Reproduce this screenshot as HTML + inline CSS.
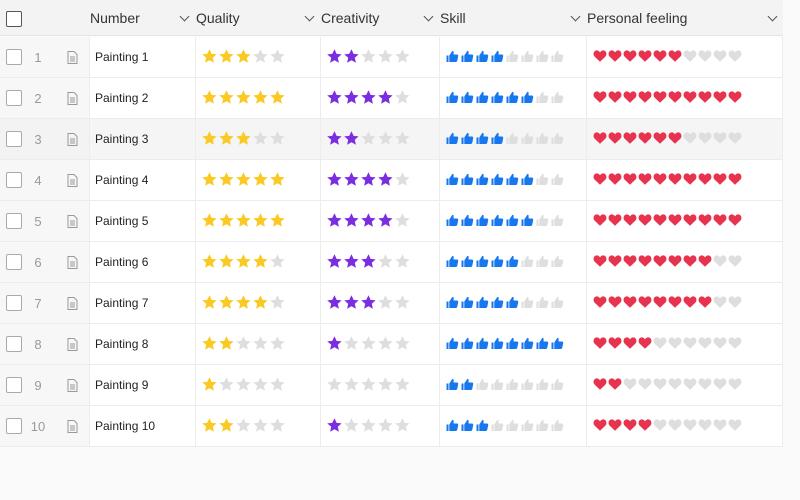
<!DOCTYPE html>
<html><head><meta charset="utf-8"><style>
body{margin:0;width:800px;height:500px;background:#fafafa;font-family:"Liberation Sans",sans-serif;position:relative;overflow:hidden}
.hdr{position:absolute;left:0;top:0;width:783px;height:36px;background:#f3f3f3;border-bottom:1px solid #e6e6e6;box-sizing:border-box}
.h{position:absolute;top:10px;font-size:14px;color:#333}
.chev{position:absolute;top:13px;width:6px;height:6px;border-right:1.3px solid #555;border-bottom:1.3px solid #555;transform:rotate(45deg)}
.row{position:absolute;left:0;width:783px;height:41px;box-sizing:border-box;border-bottom:1px solid #ececec}
.g{position:absolute;left:0;top:0;width:89px;height:40px;background:#f7f7f7}
.row.sel .g{background:#f3f3f3}
.c{position:absolute;top:0;height:40px;background:#fff;border-left:1px solid #ececec;box-sizing:border-box}
.row.sel .c{background:#f5f5f5}
.cb{position:absolute;left:6px;width:14px;height:14px;border:1.5px solid #aaa;border-radius:2px;background:#fff}
.num{position:absolute;top:13px;left:28px;width:20px;text-align:center;font-size:13px;color:#999}
.doc{position:absolute;left:67px;top:14px}
.nm{position:absolute;left:5px;top:13px;font-size:12px;color:#222}
.ic{position:absolute;top:12px;display:flex}
</style></head><body>
<svg width="0" height="0" style="position:absolute">
<defs>
<path id="st" d="M7.5 0.3l2.1 4.6 5 .5-3.8 3.4 1.1 4.9-4.4-2.5-4.4 2.5 1.1-4.9L0.2 5.4l5-.5z"/>
<path id="th" d="M0.5 6.5h2v6.5h-2zM3.3 6.5l2.8-4.2c.4-.7 1.5-.5 1.5.4v2.8h3.3c.9 0 1.5.8 1.3 1.6l-.9 4.5c-.2.8-.8 1.4-1.5 1.4H3.3z"/>
<path id="ht" d="M7 12.8L1.6 7.6C-0.4 5.6.6 1.6 3.6 1.4c1.6-.1 2.7.9 3.4 2 .7-1.1 1.8-2.1 3.4-2 3 .2 4 4.2 2 6.2z"/>
</defs></svg>
<div class="hdr">
<div class="cb" style="top:11px;border-color:#555"></div>
<div class="h" style="left:90px">Number</div><div class="chev" style="left:181px"></div>
<div class="h" style="left:196px">Quality</div><div class="chev" style="left:306px"></div>
<div class="h" style="left:321px">Creativity</div><div class="chev" style="left:425px"></div>
<div class="h" style="left:440px">Skill</div><div class="chev" style="left:572px"></div>
<div class="h" style="left:587px">Personal feeling</div><div class="chev" style="left:769px"></div>
</div>
<div id="rows"></div>
<script>
var Q=[3,5,3,5,5,4,4,2,1,2],C=[2,4,2,4,4,3,3,1,0,1],S=[4,6,4,6,6,5,5,8,2,3],P=[6,10,6,10,10,8,8,4,2,4];
function icons(id,n,tot,col,step,w){var s='';for(var i=0;i<tot;i++)s+='<svg width="'+step+'" height="15" viewBox="0 0 '+step+' 15"><use href="#'+id+'" fill="'+(i<n?col:'#dedede')+'"/></svg>';return s}
var h='';
for(var r=0;r<10;r++){
h+='<div class="row'+(r==2?' sel':'')+'" style="top:'+(37+r*41)+'px"><div class="g"><div class="cb" style="top:12px"></div><div class="num">'+(r+1)+'</div>'+
'<svg class="doc" width="11" height="13" viewBox="0 0 11 13"><path d="M1 .5h6l3 3v9H1z" fill="none" stroke="#999" stroke-width="1"/><path d="M3 6h5M3 8h5M3 10h5" stroke="#999"/></svg></div>'+
'<div class="c" style="left:89px;width:107px"><div class="nm">Painting '+(r+1)+'</div></div>'+
'<div class="c" style="left:195px;width:126px"><div class="ic" style="left:6px">'+icons('st',Q[r],5,'#fbc924',17)+'</div></div>'+
'<div class="c" style="left:320px;width:120px"><div class="ic" style="left:6px">'+icons('st',C[r],5,'#7b2ee0',17)+'</div></div>'+
'<div class="c" style="left:439px;width:148px"><div class="ic" style="left:6px">'+icons('th',S[r],8,'#1677ef',15)+'</div></div>'+
'<div class="c" style="left:586px;width:197px;border-right:1px solid #ececec"><div class="ic" style="left:6px">'+icons('ht',P[r],10,'#e8334f',15)+'</div></div></div>';
}
document.getElementById('rows').innerHTML=h;
</script>
</body></html>
